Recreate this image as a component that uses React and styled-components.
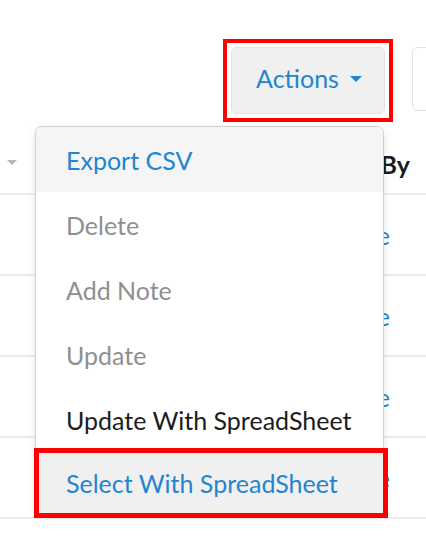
import React from 'react';
import styled, { createGlobalStyle } from 'styled-components';

const GlobalStyle = createGlobalStyle`
  html, body {
    margin: 0;
    padding: 0;
    background: #ffffff;
    overflow: hidden;
  }
  body {
    font-family: Lato, "Open Sans", "Liberation Sans", sans-serif;
  }
`

const Page = styled.div`
  position: relative;
  width: 426px;
  height: 542px;
  overflow: hidden;
`

const Toolbar = styled.div`
  display: flex;
  align-items: flex-start;
  gap: 27px;
  padding: 47px 0 0 231px;
  width: 700px;
`

const Highlight = styled.div`
  outline: ${props => props.thick}px solid #ff0000;
  outline-offset: ${props => props.offset}px;
`

const ActionsButton = styled.button`
  display: flex;
  align-items: center;
  justify-content: center;
  gap: 11px;
  width: 154px;
  height: 67px;
  padding: 0 0 6px 2px;
  background: #f0f0f0;
  border: 1px solid #e2e2e2;
  border-radius: 5px;
  color: #2185d0;
  font-family: inherit;
  font-size: 25px;
`

const Caret = styled.span`
  width: 0;
  height: 0;
  border-left: ${props => props.size}px solid transparent;
  border-right: ${props => props.size}px solid transparent;
  border-top: ${props => props.size}px solid ${props => props.color};
  margin-top: 2px;
`

const GhostButton = styled.div`
  width: 120px;
  height: 62px;
  background: #ffffff;
  border: 1px solid #e3e3e3;
  border-radius: 5px;
`

const Table = styled.div`
  margin-top: 16px;
`

const HeaderRow = styled.div`
  display: flex;
  align-items: center;
  justify-content: space-between;
  height: 63px;
  padding: 0 16px 0 7px;
  border-bottom: 2px solid #ececec;
`

const HeaderLabel = styled.span`
  font-size: 25px;
  font-weight: 700;
  color: #1b1c1d;
  margin-top: 4px;
`

const Row = styled.div`
  display: flex;
  align-items: center;
  justify-content: flex-end;
  height: 79px;
  padding-right: 36px;
  border-bottom: 2px solid #ececec;
`

const LinkText = styled.span`
  font-size: 25px;
  color: #2185d0;
`

const Menu = styled.div`
  position: absolute;
  left: 35px;
  top: 126px;
  width: 347px;
  background: #ffffff;
  border: 1px solid #d0d0d0;
  border-radius: 7px;
  box-shadow: 0 3px 8px rgba(0, 0, 0, 0.1);
`

const MenuItem = styled.div`
  display: flex;
  align-items: center;
  height: 65px;
  padding-left: 30px;
  font-size: 25px;
  color: ${props => props.color};
  background: ${props => props.bg || 'transparent'};
  border-radius: ${props => props.first ? '6px 6px 0 0' : '0'};
  white-space: nowrap;
`

const MarkedItem = styled(MenuItem)`
  margin: 1px 0 0 3px;
  padding-left: 27px;
  height: 60px;
  outline: 5px solid #ff0000;
`

const items = [
  { label: 'Export CSV', color: '#2185d0', bg: '#f5f5f5', first: true },
  { label: 'Delete', color: '#8f8f8f' },
  { label: 'Add Note', color: '#8f8f8f' },
  { label: 'Update', color: '#8f8f8f' },
  { label: 'Update With SpreadSheet', color: '#1b1c1d' },
]

const App = () => {
  return (
    <Page>
      <GlobalStyle />
      <Toolbar>
        <Highlight thick={4} offset={4}>
          <ActionsButton>
            Actions
            <Caret color="#2185d0" size={6} />
          </ActionsButton>
        </Highlight>
        <GhostButton />
      </Toolbar>
      <Table>
        <HeaderRow>
          <Caret color="#b5b5b5" size={5} />
          <HeaderLabel>By</HeaderLabel>
        </HeaderRow>
        {[0, 1, 2, 3].map(i => (
          <Row key={i}>
            <LinkText>e</LinkText>
          </Row>
        ))}
      </Table>
      <Menu>
        {items.map(item => (
          <MenuItem key={item.label} color={item.color} bg={item.bg} first={item.first}>
            {item.label}
          </MenuItem>
        ))}
        <MarkedItem color="#2185d0" bg="#f0f0f0">
          Select With SpreadSheet
        </MarkedItem>
      </Menu>
    </Page>
  )
}

export default App;
